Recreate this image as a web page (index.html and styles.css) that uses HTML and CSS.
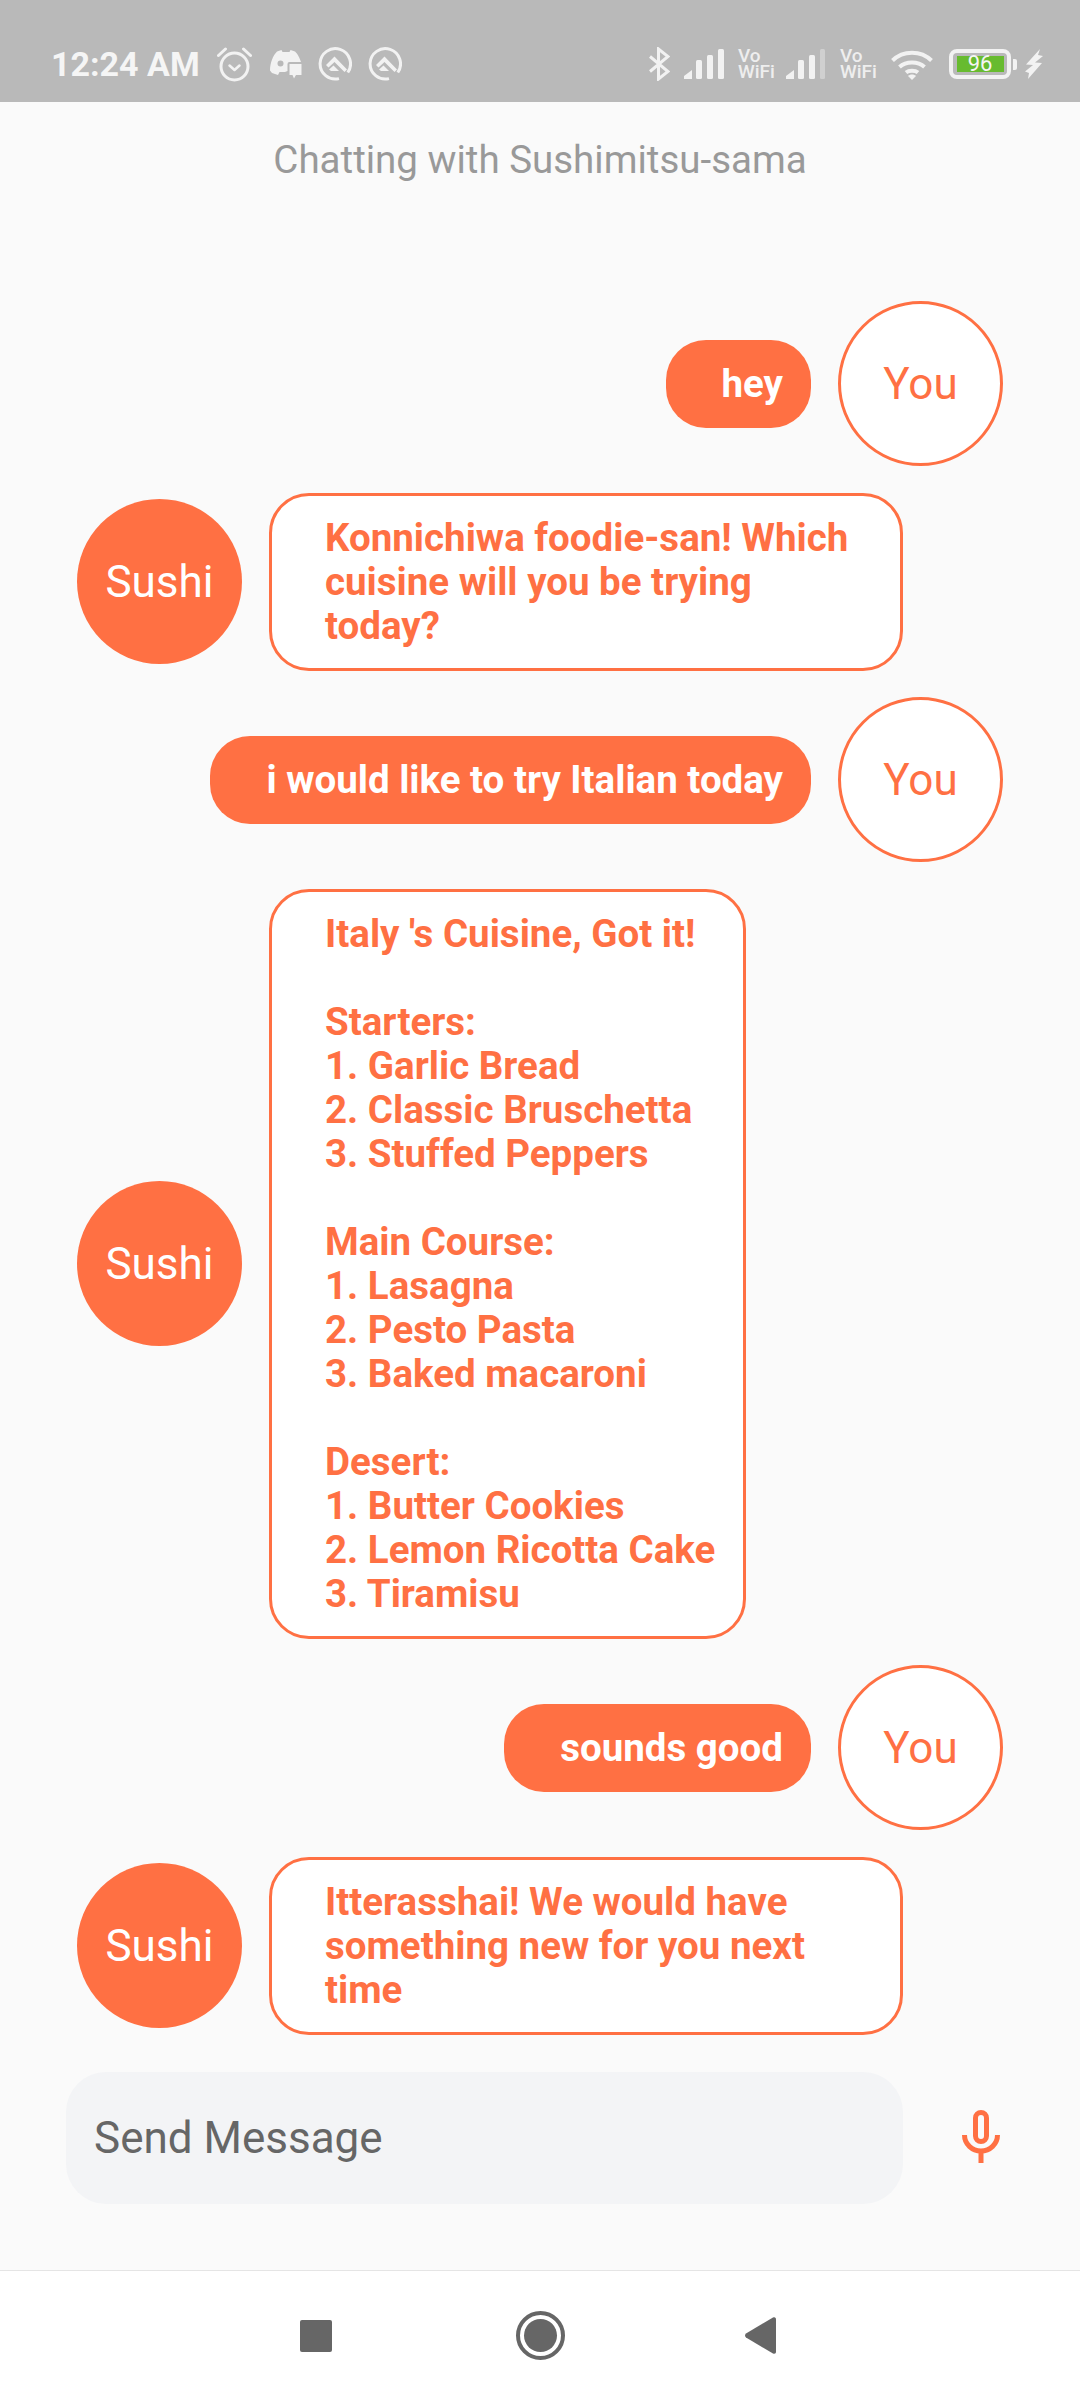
FILE: index.html
```html
<!DOCTYPE html>
<html lang="en">
<head>
    <meta charset="UTF-8">
    <meta name="viewport" content="width=device-width, initial-scale=1.0">
    <title>Chatting with Sushimitsu-sama</title>
    <link rel="stylesheet" href="styles.css">
</head>
<body>
    <div class="status-bar">
        <div class="status-left">
            <span class="time">12:24 AM</span>
            <svg class="icon-alarm" width="35" height="35" viewBox="0 0 35 35" fill="none" stroke="#f2f2f2" stroke-width="3">
                <circle cx="17.5" cy="19.5" r="13.5"/>
                <path d="M1.5 8.5L8.5 2M33.5 8.5L26.5 2" stroke-linecap="round"/>
                <path d="M12.5 18.5l5 4.5 5-4.5" stroke-width="2.5" stroke-linecap="round" stroke-linejoin="round"/>
            </svg>
            <svg class="icon-discord" width="32" height="29" viewBox="0 0 32 29" fill="#f2f2f2">
                <path d="M7 1.5L11.5 0l1 2h7l1-2 4.5 1.5c2.500 2 5 7 6 10.500H19.500a2 2 0 0 0-2 2V21l-2.500 1H9.500L8 25 2 23 0 20.500C0 13 3 5.500 7 1.500z"/>
                <circle cx="10.500" cy="13.500" r="3" fill="#b9b9b9"/>
                <path d="M19.500 14H31.500V25H26L24 28.500 22.500 25H19.500z"/>
            </svg>
            <svg class="icon-q" width="34" height="34" viewBox="0 0 34 34">
                <use href="#q-logo"/>
            </svg>
            <svg class="icon-q" width="34" height="34" viewBox="0 0 34 34">
                <symbol id="q-logo" viewBox="0 0 34 34">
                    <path d="M21 31.600A15.200 15.200 0 1 1 29.800 25.500" fill="none" stroke="#f2f2f2" stroke-width="3"/>
                    <path d="M16.500 9.500L29 22.500 26.500 25 16.500 15 10.500 20.500 8 18z" fill="#f2f2f2"/>
                    <path d="M11 22.500L15.500 18.500 21 24H13z" fill="#f2f2f2"/>
                </symbol>
                <use href="#q-logo"/>
            </svg>
        </div>
        <div class="status-right">
            <svg class="icon-bt" width="21" height="34" viewBox="0 0 21 34" fill="none" stroke="#f2f2f2" stroke-width="3">
                <path d="M1 9.500L19 24.500 9.500 32V2L19 9.500 1 24.500"/>
            </svg>
            <svg class="icon-signal" width="40" height="30" viewBox="0 0 40 30" fill="#f2f2f2">
                <path d="M0 30V27L8 21V30z"/>
                <rect x="12" y="11" width="6" height="19" rx="1.500"/>
                <rect x="23" y="6" width="6" height="24" rx="1.500"/>
                <rect x="34" y="0" width="6" height="30" rx="1.500"/>
            </svg>
            <div class="vowifi">Vo WiFi</div>
            <svg class="icon-signal signal-second" width="40" height="30" viewBox="0 0 40 30" fill="#f2f2f2">
                <path d="M0 30V27L8 21V30z"/>
                <rect x="12" y="11" width="6" height="19" rx="1.500"/>
                <rect x="23" y="6" width="6" height="24" rx="1.500"/>
                <rect x="34" y="0" width="5" height="30" rx="1.500" fill="#d0d0d0"/>
            </svg>
            <div class="vowifi">Vo WiFi</div>
            <svg class="icon-wifi" width="42" height="31" viewBox="0 0 42 31" fill="none" stroke="#f2f2f2" stroke-width="4">
                <path d="M1.500 11.500C12 1 30 1 40.500 11.500"/>
                <path d="M8.500 18C15 12 27 12 33.500 18"/>
                <path d="M15 23.500C18 21 24 21 27 23.500"/>
                <path d="M21 31l-4-4c2-2 6-2 8 0z" fill="#f2f2f2" stroke="none"/>
            </svg>
            <div class="battery">
                <div class="battery-body"><span class="battery-level">96</span></div>
                <div class="battery-nub"></div>
            </div>
            <svg class="icon-bolt" width="18" height="30" viewBox="0 0 18 30" fill="#f2f2f2">
                <path d="M15 0L1 15.500 8 16 0 22.500 4 24 3 30 17 14 10 13.500 18 7 13 6z"/>
            </svg>
        </div>
    </div>

    <h1 class="chat-title">Chatting with Sushimitsu-sama</h1>

    <div class="messages">
        <div class="row row-user">
            <div class="bubble bubble-user">hey</div>
            <div class="avatar avatar-user">You</div>
        </div>
        <div class="row row-bot">
            <div class="avatar avatar-bot">Sushi</div>
            <div class="bubble bubble-bot">Konnichiwa foodie-san! Which cuisine will you be trying today?</div>
        </div>
        <div class="row row-user">
            <div class="bubble bubble-user">i would like to try Italian today</div>
            <div class="avatar avatar-user">You</div>
        </div>
        <div class="row row-bot">
            <div class="avatar avatar-bot">Sushi</div>
            <div class="bubble bubble-bot menu-text">Italy 's Cuisine, Got it!

Starters:
1. Garlic Bread
2. Classic Bruschetta
3. Stuffed Peppers

Main Course:
1. Lasagna
2. Pesto Pasta
3. Baked macaroni

Desert:
1. Butter Cookies
2. Lemon Ricotta Cake
3. Tiramisu</div>
        </div>
        <div class="row row-user">
            <div class="bubble bubble-user">sounds good</div>
            <div class="avatar avatar-user">You</div>
        </div>
        <div class="row row-bot">
            <div class="avatar avatar-bot">Sushi</div>
            <div class="bubble bubble-bot">Itterasshai! We would have something new for you next time</div>
        </div>
    </div>

    <div class="send-row">
        <div class="send-input">Send Message</div>
        <svg class="icon-mic" width="38" height="53" viewBox="0 0 38 53" fill="none" stroke="#ff7043" stroke-width="5">
            <rect x="13.500" y="2.500" width="11" height="29" rx="5.500"/>
            <path d="M2.500 25C2.500 34 10 41 19 41S35.500 34 35.500 25"/>
            <path d="M19 41V53"/>
        </svg>
    </div>

    <div class="nav-bar">
        <div class="nav-square"></div>
        <svg class="nav-circle" width="49" height="49" viewBox="0 0 49 49">
            <circle cx="24.500" cy="24.500" r="22.500" fill="none" stroke="#666666" stroke-width="4"/>
            <circle cx="24.500" cy="24.500" r="16.500" fill="#666666"/>
        </svg>
        <svg class="nav-back" width="31" height="37" viewBox="0 0 31 37" fill="#666666">
            <path d="M28 .5c2-.8 3 .2 3 2v32c0 1.800-1 2.800-3 2L1 20.500c-1.300-1-1.300-3 0-4z"/>
        </svg>
    </div>
</body>
</html>
```

FILE: styles.css
```css
/* Reset */
* {
    margin: 0;
    padding: 0;
    box-sizing: border-box;
}

body {
    width: 1080px;
    height: 2400px;
    display: flex;
    flex-direction: column;
    overflow: hidden;
    font-family: Roboto, sans-serif;
    background-color: #fafafa;
}

/* Status bar */
.status-bar {
    height: 102px;
    flex-shrink: 0;
    display: flex;
    justify-content: space-between;
    align-items: center;
    padding: 26px 37px 0 51px;
    background-color: #b9b9b9;
    color: #f5f5f5;
}

.status-left,
.status-right {
    display: flex;
    align-items: center;
}

.time {
    font-size: 34px;
    font-weight: 700;
    margin-right: 17px;
}

.icon-discord {
    margin-left: 18px;
}

.icon-q {
    margin-left: 16px;
}

.status-right {
    gap: 14px;
}

.signal-second {
    margin-left: -3px;
}

.vowifi {
    width: 37px;
    font-size: 19px;
    font-weight: 500;
    line-height: 16px;
    color: #eeeeee;
}

.battery {
    display: flex;
    align-items: center;
    gap: 2px;
    margin-left: 2px;
}

.battery-body {
    width: 62px;
    height: 30px;
    display: flex;
    align-items: center;
    justify-content: center;
    border: 4px solid #f2f2f2;
    border-radius: 8px;
}

.battery-level {
    width: 47px;
    height: 16px;
    display: flex;
    align-items: center;
    justify-content: center;
    background-color: #67bb2f;
    font-size: 22px;
    line-height: 16px;
    color: #f5f5f5;
}

.battery-nub {
    width: 4px;
    height: 11px;
    border-radius: 0 2px 2px 0;
    background-color: #f2f2f2;
}

.icon-bolt {
    margin-left: -6px;
}

/* Title */
.chat-title {
    height: 116px;
    flex-shrink: 0;
    padding-top: 36px;
    font-size: 38.5px;
    font-weight: 400;
    line-height: 44px;
    text-align: center;
    color: #999999;
}

/* Messages */
.messages {
    height: 1854px;
    flex-shrink: 0;
    display: flex;
    flex-direction: column;
    gap: 26.5px;
    padding-top: 83px;
}

.row {
    display: flex;
    align-items: center;
}

.row-user {
    justify-content: flex-end;
    gap: 27px;
    padding-right: 77px;
}

.row-bot {
    gap: 27px;
    padding-left: 77px;
}

.avatar {
    width: 165px;
    height: 165px;
    flex-shrink: 0;
    display: flex;
    align-items: center;
    justify-content: center;
    border-radius: 50%;
    font-size: 44px;
}

.avatar-user {
    border: 3px solid #ff7043;
    background-color: #ffffff;
    color: #ff7043;
}

.avatar-bot {
    background-color: #ff7043;
    color: #ffffff;
}

.bubble {
    max-width: 634px;
    padding: 22px 28px 22px 56px;
    border-radius: 40px;
    font-size: 38.5px;
    font-weight: 700;
    line-height: 44px;
}

.bubble-user {
    background-color: #ff7043;
    color: #ffffff;
}

.bubble-bot {
    padding: 20px 28px 20px 53px;
    border: 3px solid #ff7043;
    background-color: #ffffff;
    color: #ff7043;
}

.menu-text {
    white-space: pre-line;
}

/* Message input */
.send-row {
    height: 198px;
    flex-shrink: 0;
    display: flex;
    align-items: flex-start;
    padding-left: 66px;
}

.send-input {
    width: 837px;
    height: 132px;
    display: flex;
    align-items: center;
    padding-left: 28px;
    border-radius: 40px;
    background-color: #f3f4f6;
    font-size: 44px;
    color: #666666;
}

.icon-mic {
    margin: 38px 0 0 59px;
}

/* Android navigation */
.nav-bar {
    flex: 1;
    display: flex;
    align-items: center;
    padding-left: 300px;
    border-top: 1px solid #e5e5e5;
    background-color: #ffffff;
}

.nav-square {
    width: 32px;
    height: 32px;
    margin-right: 184px;
    border-radius: 2px;
    background-color: #666666;
}

.nav-circle {
    margin-right: 180px;
}
```
